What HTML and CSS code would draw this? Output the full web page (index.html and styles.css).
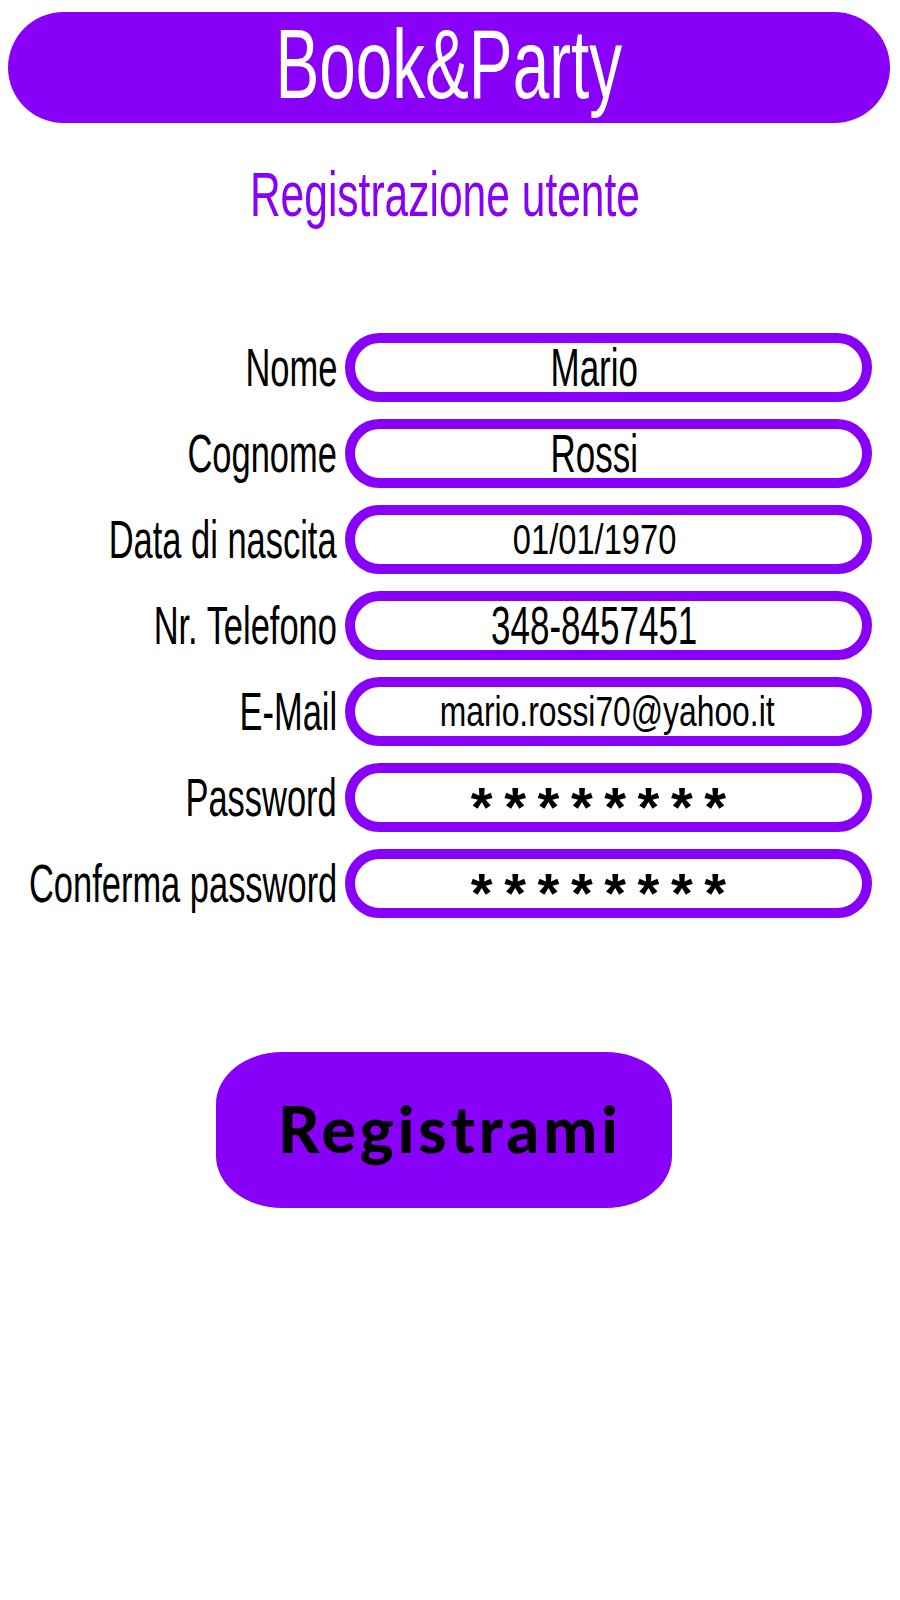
FILE: index.html
```html
<!DOCTYPE html>
<html lang="it">
<head>
<meta charset="utf-8">
<title>Book&amp;Party - Registrazione utente</title>
<link rel="stylesheet" href="styles.css">
</head>
<body>
<header class="brand-bar">
  <h1 class="brand"><span class="cond cond-brand">Book&amp;Party</span></h1>
</header>
<h2 class="page-title"><span class="cond cond-title">Registrazione utente</span></h2>

<form class="reg-form">
  <label class="field-label"><span class="cond cond-right">Nome</span></label>
  <div class="field"><span class="cond">Mario</span></div>

  <label class="field-label"><span class="cond cond-right">Cognome</span></label>
  <div class="field"><span class="cond">Rossi</span></div>

  <label class="field-label"><span class="cond cond-right">Data di nascita</span></label>
  <div class="field field-small"><span class="cond cond-date">01/01/1970</span></div>

  <label class="field-label"><span class="cond cond-right">Nr. Telefono</span></label>
  <div class="field"><span class="cond">348-8457451</span></div>

  <label class="field-label"><span class="cond cond-right">E-Mail</span></label>
  <div class="field field-small"><span class="cond cond-mail">mario.rossi70@yahoo.it</span></div>

  <label class="field-label"><span class="cond cond-right">Password</span></label>
  <div class="field field-stars"><span class="stars">* * * * * * * *</span></div>

  <label class="field-label"><span class="cond cond-right">Conferma password</span></label>
  <div class="field field-stars"><span class="stars">* * * * * * * *</span></div>
</form>

<div class="actions">
  <button class="register-btn" type="button">Registrami</button>
</div>
</body>
</html>
```

FILE: styles.css
```css
html, body {
  margin: 0;
  padding: 0;
  background: #ffffff;
}

body {
  width: 900px;
  font-family: "Liberation Sans", Arial, sans-serif;
  color: #000000;
}

.cond {
  display: inline-block;
  transform: scaleX(0.66);
  transform-origin: center;
  white-space: nowrap;
}

.cond-right {
  transform: scaleX(0.65);
  transform-origin: right center;
}

.brand-bar {
  margin: 12px 10px 0 8px;
  height: 111px;
  border-radius: 56px;
  background: #8800f8;
  display: flex;
  align-items: center;
  justify-content: center;
}

.brand {
  margin: 0;
  font-size: 98px;
  font-weight: 400;
  line-height: 1;
  color: #ffffff;
  padding-bottom: 8px;
}

.cond-brand {
  transform: scaleX(0.67);
}

.page-title {
  margin: 36px 0 0 0;
  text-align: center;
  padding-right: 10px;
  font-size: 63px;
  font-weight: 400;
  line-height: 70px;
  color: #8800f8;
}

.cond-title {
  transform: scaleX(0.675);
}

.reg-form {
  margin-top: 104px;
  display: grid;
  grid-template-columns: 337px 527px;
  column-gap: 8px;
  row-gap: 17px;
}

.field-label {
  height: 69px;
  display: flex;
  align-items: center;
  justify-content: flex-end;
  font-size: 53px;
  line-height: 1;
}

.field {
  box-sizing: border-box;
  height: 69px;
  border: 10px solid #8800f8;
  border-radius: 35px;
  display: flex;
  align-items: center;
  justify-content: center;
  padding-right: 28px;
  font-size: 53px;
  line-height: 1;
}

.field-small {
  font-size: 43px;
}

.cond-date {
  transform: scaleX(0.76);
}

.cond-mail {
  transform: scaleX(0.74);
  margin-left: 26px;
}

.field-stars {
  padding-right: 22px;
}

.stars {
  font-size: 56px;
  font-weight: 700;
  letter-spacing: -2px;
  padding-top: 19px;
  white-space: nowrap;
}

.actions {
  margin-top: 134px;
  padding-left: 216px;
}

.register-btn {
  width: 456px;
  height: 156px;
  border: none;
  border-radius: 66px / 52px;
  background: #8800f8;
  color: #000000;
  font-family: Lato, "Liberation Sans", sans-serif;
  font-weight: 900;
  font-size: 64px;
  letter-spacing: 4px;
  padding: 0 0 4px 12px;
  cursor: pointer;
}
```
